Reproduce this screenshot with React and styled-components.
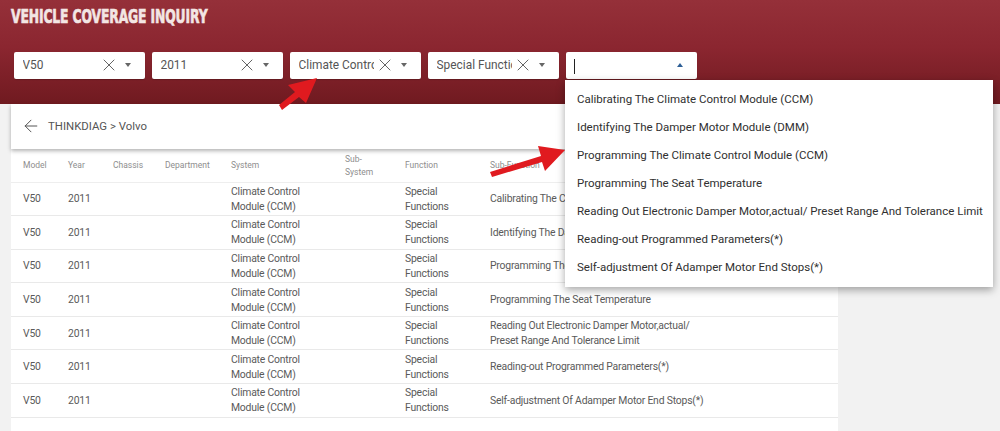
import React from "react";
import styled, { createGlobalStyle } from "styled-components";
import { X, ArrowLeft } from "lucide-react";

const Global = createGlobalStyle`
  html, body { margin: 0; padding: 0; background: #f2f2f2; }
  body { font-family: Roboto, "Liberation Sans", sans-serif; overflow: hidden; }
`;
const Page = styled.div`
  position: relative;
  width: 1000px;
  height: 431px;
  overflow: hidden;
  background: #f2f2f2;
`;
const Header = styled.header`
  height: 104px;
  box-sizing: border-box;
  padding: 5px 14px 0;
  background: linear-gradient(180deg, #953039 0%, #8b2630 45%, #701a20 100%);
`;
const Title = styled.h1`
  margin: 0 0 0 -3px;
  height: 47px;
  width: 280px;
  color: #f3e6e4;
  font-family: "DejaVu Sans", sans-serif;
  font-size: 19px;
  line-height: 22px;
  font-weight: 700;
  white-space: nowrap;
  letter-spacing: -0.2px;
  -webkit-text-stroke: 0.7px #f3e6e4;
  transform: scaleX(0.65);
  transform-origin: left center;
`;
const Filters = styled.div`
  display: flex;
  gap: 7px;
`;
const Select = styled.div`
  width: 131px;
  height: 27px;
  box-sizing: border-box;
  padding: 0 9px 1px 9px;
  display: flex;
  align-items: center;
  background: #fff;
  border-radius: 2px;
  color: #555;
  font-size: 11.9px;
  box-shadow: 0 1px 1px rgba(0,0,0,.2);
`;
const Value = styled.span`
  width: 75px;
  flex: none;
  overflow: hidden;
  white-space: nowrap;
  margin-left: -0.5px;
  margin-right: 0.5px;
`;
const Clear = styled(X)`
  flex: none;
  margin-left: 0.5px;
  color: #555;
`;
const Caret = styled.span`
  margin-left: auto;
  margin-right: 5px;
  width: 0;
  height: 0;
  border-left: 3.5px solid transparent;
  border-right: 3.5px solid transparent;
  ${p => p.$up
    ? "border-bottom: 4px solid #2d5f96;"
    : "border-top: 4px solid #666;"}
`;
const Cursor = styled.span`
  width: 1px;
  height: 15px;
  background: #222;
  margin-left: -1px;
  margin-top: 3px;
`;
const Card = styled.main`
  width: 827px;
  margin-left: 11px;
  height: 327px;
  background: #fff;
`;
const Crumbs = styled.div`
  height: 45px;
  box-sizing: border-box;
  padding: 0 0 1px 10px;
  display: flex;
  align-items: center;
  gap: 7px;
  background: #fff;
  color: #555;
  font-size: 11.4px;
  box-shadow: 0 2px 4px rgba(0,0,0,.3);
  position: relative;
`;
const Table = styled.table`
  width: 827px;
  table-layout: fixed;
  border-collapse: collapse;
  margin-top: 1px;
`;
const Th = styled.th`
  width: ${p => p.$w}px;
  height: 32px;
  box-sizing: border-box;
  padding: 0 0 0 12px;
  text-align: left;
  vertical-align: middle;
  font-weight: 400;
  font-size: 8.5px;
  line-height: 13px;
  color: #8e8e8e;
  border-bottom: 1px solid #eee;
`;
const Td = styled.td`
  height: 33.6px;
  box-sizing: border-box;
  padding: 0 0 0 12px;
  font-size: 10.4px;
  line-height: 15px;
  letter-spacing: -0.2px;
  color: #5a5a5a;
  border-bottom: 1px solid #e9e9e9;
`;
const Menu = styled.ul`
  position: absolute;
  left: 565px;
  top: 80px;
  width: 428px;
  height: 207px;
  box-sizing: border-box;
  margin: 0;
  padding: 5px 0 0 12px;
  list-style: none;
  background: #fff;
  box-shadow: 0 3px 8px rgba(0,0,0,.35);
`;
const Option = styled.li`
  height: 28px;
  line-height: 28px;
  font-size: 11.5px;
  color: #303030;
  white-space: nowrap;
`;
const Arrows = styled.svg`
  position: absolute;
  left: 0;
  top: 0;
  pointer-events: none;
`;

const rows = [
  "Calibrating The Climate Control Module (CCM)",
  "Identifying The Damper Motor Module (DMM)",
  "Programming The Climate Control Module (CCM)",
  "Programming The Seat Temperature",
  "Reading Out Electronic Damper Motor,actual/ Preset Range And Tolerance Limit",
  "Reading-out Programmed Parameters(*)",
  "Self-adjustment Of Adamper Motor End Stops(*)",
];
const cols = [
  ["Model", 45], ["Year", 45], ["Chassis", 52], ["Department", 66],
  ["System", 114], ["Sub-System", 60], ["Function", 85], ["Sub-Function", 360],
];
const filters = ["V50", "2011", "Climate Control Module (CCM)", "Special Functions"];

export default function App() {
  return (
    <Page>
      <Global />
      <Header>
        <Title>VEHICLE COVERAGE INQUIRY</Title>
        <Filters>
          {filters.map(v => (
            <Select key={v}>
              <Value>{v}</Value>
              <Clear size={20} strokeWidth={1.1} />
              <Caret />
            </Select>
          ))}
          <Select>
            <Cursor />
            <Caret $up />
          </Select>
        </Filters>
      </Header>
      <Card>
        <Crumbs>
          <ArrowLeft size={20} strokeWidth={1.2} />
          <span>THINKDIAG &gt; Volvo</span>
        </Crumbs>
        <Table>
          <thead>
            <tr>
              {cols.map(([c, w]) => <Th key={c} $w={w}>{c === "Sub-System" ? <>Sub-<br />System</> : c}</Th>)}
            </tr>
          </thead>
          <tbody>
            {rows.map(r => (
              <tr key={r}>
                <Td>V50</Td>
                <Td>2011</Td>
                <Td />
                <Td />
                <Td>Climate Control<br />Module (CCM)</Td>
                <Td />
                <Td>Special<br />Functions</Td>
                <Td>{r.includes("actual/") ? <>Reading Out Electronic Damper Motor,actual/<br />Preset Range And Tolerance Limit</> : r}</Td>
              </tr>
            ))}
          </tbody>
        </Table>
      </Card>
      <Menu>
        {rows.map(r => <Option key={r}>{r}</Option>)}
      </Menu>
      <Arrows width="1000" height="431" viewBox="0 0 1000 431">
        <polygon fill="#e01a1f" points="317,78 288,85 295,92 279,105 282,110 299,97 306,103" />
        <polygon fill="#e01a1f" points="565,150 538,146 541,156 490,172 492,177 542,162 545,171" />
      </Arrows>
    </Page>
  );
}
